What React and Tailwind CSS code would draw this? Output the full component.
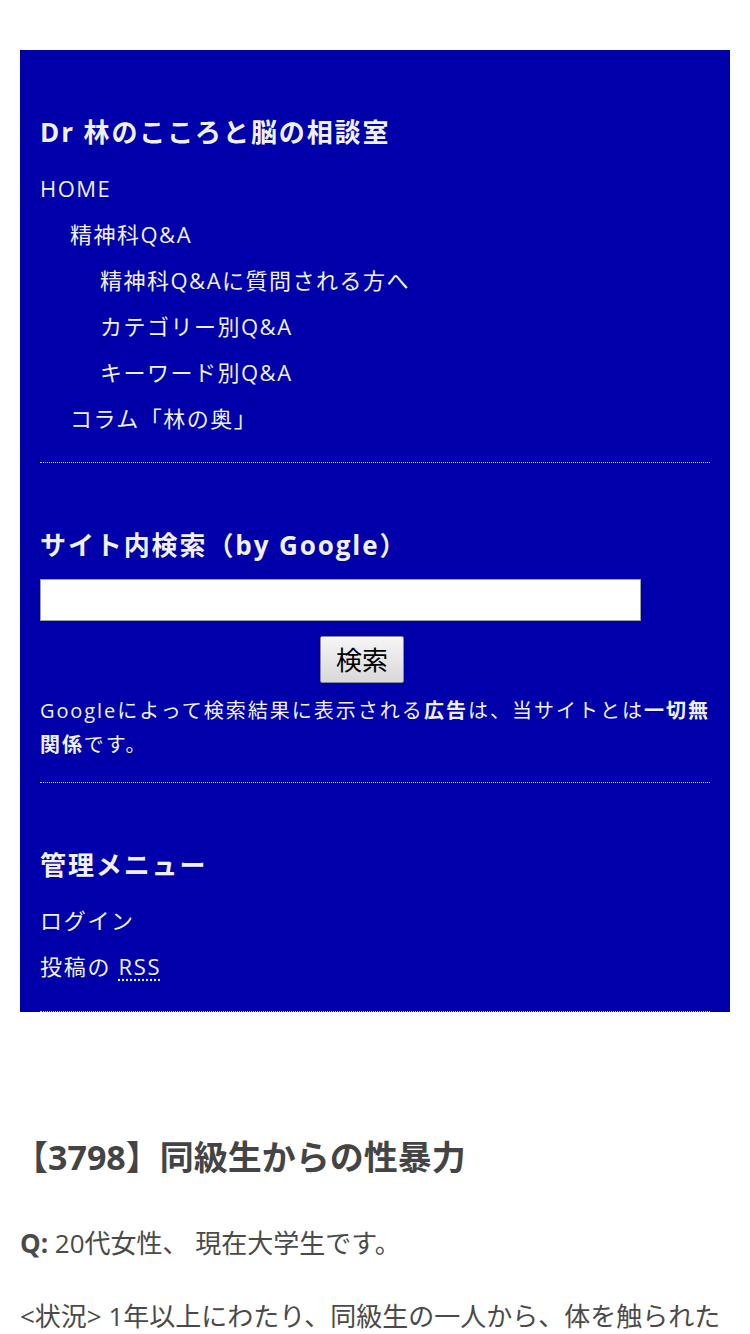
// サイドバー + 記事冒頭
import React from 'react';

const font = { fontFamily: '"Open Sans", "Noto Sans CJK JP", sans-serif' };

const menu = [
  { label: 'HOME', depth: 0 },
  { label: '精神科Q&A', depth: 1 },
  { label: '精神科Q&Aに質問される方へ', depth: 2 },
  { label: 'カテゴリー別Q&A', depth: 2 },
  { label: 'キーワード別Q&A', depth: 2 },
  { label: 'コラム「林の奥」', depth: 1 },
];

const indent = ['pl-0', 'pl-[30px]', 'pl-[60px]'];

function Widget({ title, children, bottom = 'pb-[21px]' }) {
  return (
    <section className={`pt-[64px] ${bottom} border-b border-dotted border-[#c8c8f0]`}>
      <h3 className="text-[26px] leading-[36px] font-bold tracking-[1.9px] text-[#f0f0f0]">{title}</h3>
      {children}
    </section>
  );
}

export default function App() {
  return (
    <div className="min-h-screen bg-white px-5 pt-[50px]" style={font}>
      {/* サイドバー */}
      <aside className="bg-[#0000aa] px-5 text-[#f0f0f0]">
        <Widget title="Dr 林のこころと脳の相談室">
          <ul className="mt-[15px]">
            {menu.map((m) => (
              <li key={m.label} className={`${indent[m.depth]} text-[22px] leading-[46px] tracking-[1.5px]`}>
                {m.label}
              </li>
            ))}
          </ul>
        </Widget>

        <Widget title="サイト内検索（by Google）" bottom="pb-[20px]">
          <div className="mt-[16px] flex flex-col">
            <input
              type="text"
              className="w-[601px] h-[42px] bg-white border border-[#9aa0a8] outline-none"
            />
            <button className="mt-[15px] ml-[280px] w-[84px] h-[47px] rounded-[2px] border border-[#8a8a9a] bg-gradient-to-b from-[#f6f6f6] to-[#d8d8d8] text-[26px] leading-none text-black">
              検索
            </button>
          </div>
          <p className="mt-[11px] text-[20px] leading-[34px] tracking-[1.9px] text-justify">
            Googleによって検索結果に表示される<b>広告</b>は、当サイトとは<b>一切無関係</b>です。
          </p>
        </Widget>

        <Widget title="管理メニュー" bottom="pb-[22px]">
          <ul className="mt-[14px] text-[22px] leading-[46px] tracking-[1.7px]">
            <li>ログイン</li>
            <li>
              投稿の <span className="underline decoration-dotted underline-offset-4">RSS</span>
            </li>
          </ul>
        </Widget>
      </aside>

      {/* 記事 */}
      <article className="pt-[120px] text-[#4a4a4a]">
        <h1 className="text-[34px] leading-[50px] font-bold text-[#444] -ml-[6px]">【3798】同級生からの性暴力</h1>
        <p className="mt-[40px] text-[26px] leading-[42px]">
          <b>Q:</b> 20代女性、 現在大学生です。
        </p>
        <p className="mt-[31px] text-[26px] leading-[42px]">
          &lt;状況&gt; 1年以上にわたり、同級生の一人から、体を触られたり、無理やり関係を迫られたりしてきました。
        </p>
      </article>
    </div>
  );
}
